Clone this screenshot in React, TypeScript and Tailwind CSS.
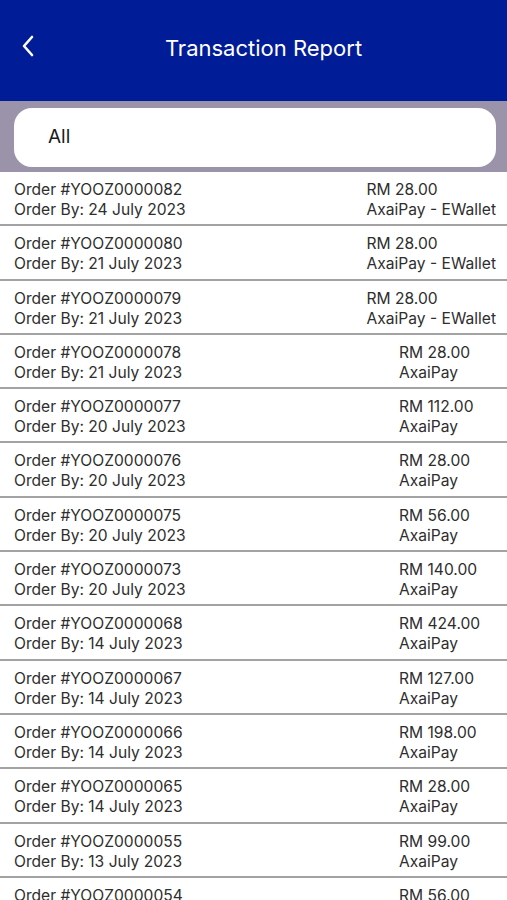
import React from "react";

const rows: [string, string, string, string][] = [
  ["0000082", "24 July 2023", "RM 28.00", "AxaiPay - EWallet"],
  ["0000080", "21 July 2023", "RM 28.00", "AxaiPay - EWallet"],
  ["0000079", "21 July 2023", "RM 28.00", "AxaiPay - EWallet"],
  ["0000078", "21 July 2023", "RM 28.00", "AxaiPay"],
  ["0000077", "20 July 2023", "RM 112.00", "AxaiPay"],
  ["0000076", "20 July 2023", "RM 28.00", "AxaiPay"],
  ["0000075", "20 July 2023", "RM 56.00", "AxaiPay"],
  ["0000073", "20 July 2023", "RM 140.00", "AxaiPay"],
  ["0000068", "14 July 2023", "RM 424.00", "AxaiPay"],
  ["0000067", "14 July 2023", "RM 127.00", "AxaiPay"],
  ["0000066", "14 July 2023", "RM 198.00", "AxaiPay"],
  ["0000065", "14 July 2023", "RM 28.00", "AxaiPay"],
  ["0000055", "13 July 2023", "RM 99.00", "AxaiPay"],
  ["0000054", "13 July 2023", "RM 56.00", "AxaiPay"],
];

export default function App() {
  return (
    <div
      className="w-[507px] h-[900px] overflow-hidden bg-white"
      style={{ fontFamily: "Inter, 'Liberation Sans', sans-serif" }}
    >
      <div className="h-[101px] bg-[#001c96] flex items-center relative">
        <div className="absolute left-[20px] top-[34px]">
          <svg width="16" height="24" viewBox="0 0 16 24" fill="none">
            <path d="M12 3 L4 12 L12 21" stroke="white" strokeWidth="2.6" strokeLinecap="round" strokeLinejoin="round" />
          </svg>
        </div>
        <div className="w-full text-center text-white text-[22px] -mt-[5px] pl-[20px]">Transaction Report</div>
      </div>
      <div className="h-[71px] bg-[#9a93a9] pl-[14px] pr-[11px] pt-[7px]">
        <div className="h-[59px] bg-white rounded-[18px] flex items-center pl-[34px] text-[19px] text-[#1a1a1a]">
          All
        </div>
      </div>
      <div>
        {rows.map((r, i) => (
          <div
            key={i}
            className="h-[54.3px] border-b-2 border-[#a3a3a3] flex justify-between pl-[14px] pr-[11px] pt-[8px] text-[15.6px] leading-[20px] text-[#2e2e2e]"
          >
            <div>
              <div>Order #YOOZ{r[0]}</div>
              <div>Order By: {r[1]}</div>
            </div>
            <div className="min-w-[97px]">
              <div>{r[2]}</div>
              <div>{r[3]}</div>
            </div>
          </div>
        ))}
      </div>
    </div>
  );
}
